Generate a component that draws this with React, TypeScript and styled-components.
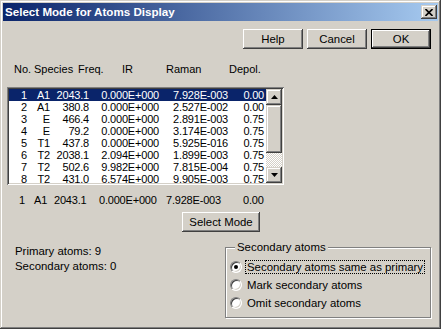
import styled, { createGlobalStyle } from "styled-components";

const GlobalStyle = createGlobalStyle`
  html, body {
    margin: 0;
    padding: 0;
    background: #d4d0c8;
  }
  body {
    font-family: "Liberation Sans", Arial, sans-serif;
    font-size: 11px;
    color: #000;
  }
`;

const raised = `
  box-shadow: inset -1px -1px #404040, inset 1px 1px #ffffff,
    inset -2px -2px #808080, inset 2px 2px #d4d0c8;
`;

const raisedSoft = `
  box-shadow: inset -1px -1px #404040, inset 1px 1px #d4d0c8,
    inset -2px -2px #808080, inset 2px 2px #ffffff;
`;

const Window = styled.div`
  width: 441px;
  height: 329px;
  box-sizing: border-box;
  padding: 3px;
  background: #d4d0c8;
  display: flex;
  flex-direction: column;
  ${raisedSoft}
`;

const TitleBar = styled.div`
  height: 18px;
  display: flex;
  align-items: center;
  justify-content: space-between;
  padding: 0 1px 0 2px;
  background: linear-gradient(to right, #0a246a, #a6caf0);
`;

const Title = styled.span`
  color: #fff;
  font-weight: bold;
  font-size: 11.6px;
  line-height: 18px;
`;

const CloseButton = styled.div`
  width: 16px;
  height: 14px;
  background: #d4d0c8;
  display: flex;
  align-items: center;
  justify-content: center;
  ${raisedSoft}
`;

const Body = styled.div`
  display: flex;
  flex-direction: column;
  flex: 1;
`;

const ButtonRow = styled.div`
  display: flex;
  justify-content: flex-end;
  gap: 4px;
  margin-top: 8px;
  padding-right: 7px;
`;

const Button = styled.button<{ $default?: boolean; $width?: number }>`
  width: ${(p) => p.$width ?? 60}px;
  height: 20px;
  box-sizing: border-box;
  margin: 0;
  padding: 0;
  border: ${(p) => (p.$default ? "1px solid #000" : "none")};
  background: #d4d0c8;
  color: #000;
  font: 11.4px "Liberation Sans", Arial, sans-serif;
  ${raised}
`;

const Header = styled.div`
  display: grid;
  grid-template-columns: 20px 44px 44px 44px 63px auto;
  margin-top: 14px;
  padding-left: 11px;
  line-height: 12px;
`;

const ListBox = styled.div`
  display: flex;
  margin: 12px 0 0 4px;
  width: 277px;
  height: 98px;
  box-sizing: border-box;
  padding: 2px;
  background: #fff;
  overflow: hidden;
  box-shadow: inset 1px 1px #808080, inset -1px -1px #ffffff,
    inset 2px 2px #404040, inset -2px -2px #d4d0c8;
`;

const Rows = styled.div`
  flex: 1;
  overflow: hidden;
`;

const Row = styled.div<{ $selected?: boolean }>`
  display: grid;
  grid-template-columns: 18px 23px 39px 70px 69px 36px;
  height: 12px;
  line-height: 12px;
  text-align: right;
  letter-spacing: -0.2px;
  white-space: nowrap;
  background: ${(p) => (p.$selected ? "#0a246a" : "transparent")};
  color: ${(p) => (p.$selected ? "#fff" : "#000")};
`;

const ScrollBar = styled.div`
  width: 16px;
  display: flex;
  flex-direction: column;
`;

const ScrollButton = styled.div`
  height: 16px;
  background: #d4d0c8;
  display: flex;
  align-items: center;
  justify-content: center;
  ${raisedSoft}
`;

const Thumb = styled.div`
  height: 48px;
  background: #d4d0c8;
  ${raisedSoft}
`;

const Track = styled.div`
  flex: 1;
  background: repeating-conic-gradient(#ffffff 0 25%, #d4d0c8 0 50%) 0 0 / 2px 2px;
`;

const Summary = styled.div`
  display: grid;
  grid-template-columns: 15px 20px 45px 67px 77px auto;
  margin-top: 9px;
  padding-left: 16px;
  line-height: 12px;
  letter-spacing: -0.2px;
`;

const SelectRow = styled.div`
  margin: 6px 0 0 179px;
`;

const BottomRow = styled.div`
  display: flex;
  justify-content: space-between;
  align-items: flex-start;
  margin-top: 9px;
  padding-right: 7px;
`;

const Counts = styled.div`
  margin-top: 3px;
  padding-left: 12px;
  line-height: 15px;
  font-size: 11.4px;
`;

const GroupBox = styled.fieldset`
  width: 206px;
  box-sizing: border-box;
  margin: 0;
  padding: 5px 0 5px 4px;
  border: 1px solid #808080;
  box-shadow: inset 1px 1px #ffffff, 1px 1px #ffffff;
  font-size: 11.4px;
`;

const Legend = styled.legend`
  margin-left: 5px;
  padding: 0 2px;
  line-height: 12px;
  background: #d4d0c8;
`;

const RadioRow = styled.div`
  display: flex;
  align-items: center;
  height: 18px;
`;

const RadioCircle = styled.span<{ $checked?: boolean }>`
  width: 12px;
  height: 12px;
  box-sizing: border-box;
  border-radius: 50%;
  border: 1px solid;
  border-color: #808080 #ffffff #ffffff #808080;
  background: #fff;
  box-shadow: inset 1px 1px #404040, inset -1px -1px #d4d0c8;
  display: flex;
  align-items: center;
  justify-content: center;
  &::after {
    content: "";
    width: 4px;
    height: 4px;
    border-radius: 50%;
    background: ${(p) => (p.$checked ? "#000" : "transparent")};
  }
`;

const RadioLabel = styled.span<{ $focused?: boolean }>`
  margin-left: 3px;
  padding: 0 1px;
  line-height: 12px;
  border: 1px dotted ${(p) => (p.$focused ? "#000" : "transparent")};
`;

type Mode = {
  no: number;
  species: string;
  freq: string;
  ir: string;
  raman: string;
  depol: string;
};

const modes: Mode[] = [
  { no: 1, species: "A1", freq: "2043.1", ir: "0.000E+000", raman: "7.928E-003", depol: "0.00" },
  { no: 2, species: "A1", freq: "380.8", ir: "0.000E+000", raman: "2.527E-002", depol: "0.00" },
  { no: 3, species: "E", freq: "466.4", ir: "0.000E+000", raman: "2.891E-003", depol: "0.75" },
  { no: 4, species: "E", freq: "79.2", ir: "0.000E+000", raman: "3.174E-003", depol: "0.75" },
  { no: 5, species: "T1", freq: "437.8", ir: "0.000E+000", raman: "5.925E-016", depol: "0.75" },
  { no: 6, species: "T2", freq: "2038.1", ir: "2.094E+000", raman: "1.899E-003", depol: "0.75" },
  { no: 7, species: "T2", freq: "502.6", ir: "9.982E+000", raman: "7.815E-004", depol: "0.75" },
  { no: 8, species: "T2", freq: "431.0", ir: "6.574E+000", raman: "9.905E-003", depol: "0.75" },
];

const radios = [
  "Secondary atoms same as primary",
  "Mark secondary atoms",
  "Omit secondary atoms",
];

const Arrow = ({ down }: { down?: boolean }) => (
  <svg width="7" height="4" viewBox="0 0 7 4">
    <polygon points={down ? "0,0 7,0 3.5,4" : "3.5,0 7,4 0,4"} fill="#000" />
  </svg>
);

export default function App() {
  const selected = modes[0];
  return (
    <>
      <GlobalStyle />
      <Window>
        <TitleBar>
          <Title>Select Mode for Atoms Display</Title>
          <CloseButton>
            <svg width="8" height="7" viewBox="0 0 8 7">
              <path d="M0.5 0 L7.5 7 M7.5 0 L0.5 7" stroke="#000" strokeWidth="1.6" />
            </svg>
          </CloseButton>
        </TitleBar>
        <Body>
          <ButtonRow>
            <Button>Help</Button>
            <Button>Cancel</Button>
            <Button $default>OK</Button>
          </ButtonRow>

          <Header>
            <span>No.</span>
            <span>Species</span>
            <span>Freq.</span>
            <span>IR</span>
            <span>Raman</span>
            <span>Depol.</span>
          </Header>

          <ListBox>
            <Rows>
              {modes.map((m) => (
                <Row key={m.no} $selected={m.no === selected.no}>
                  <span>{m.no}</span>
                  <span>{m.species}</span>
                  <span>{m.freq}</span>
                  <span>{m.ir}</span>
                  <span>{m.raman}</span>
                  <span>{m.depol}</span>
                </Row>
              ))}
            </Rows>
            <ScrollBar>
              <ScrollButton>
                <Arrow />
              </ScrollButton>
              <Thumb />
              <Track />
              <ScrollButton>
                <Arrow down />
              </ScrollButton>
            </ScrollBar>
          </ListBox>

          <Summary>
            <span>{selected.no}</span>
            <span>{selected.species}</span>
            <span>{selected.freq}</span>
            <span>{selected.ir}</span>
            <span>{selected.raman}</span>
            <span>{selected.depol}</span>
          </Summary>

          <SelectRow>
            <Button $width={78}>Select Mode</Button>
          </SelectRow>

          <BottomRow>
            <Counts>
              <div>Primary atoms: 9</div>
              <div>Secondary atoms: 0</div>
            </Counts>
            <GroupBox>
              <Legend>Secondary atoms</Legend>
              {radios.map((label, i) => (
                <RadioRow key={label}>
                  <RadioCircle $checked={i === 0} />
                  <RadioLabel $focused={i === 0}>{label}</RadioLabel>
                </RadioRow>
              ))}
            </GroupBox>
          </BottomRow>
        </Body>
      </Window>
    </>
  );
}
